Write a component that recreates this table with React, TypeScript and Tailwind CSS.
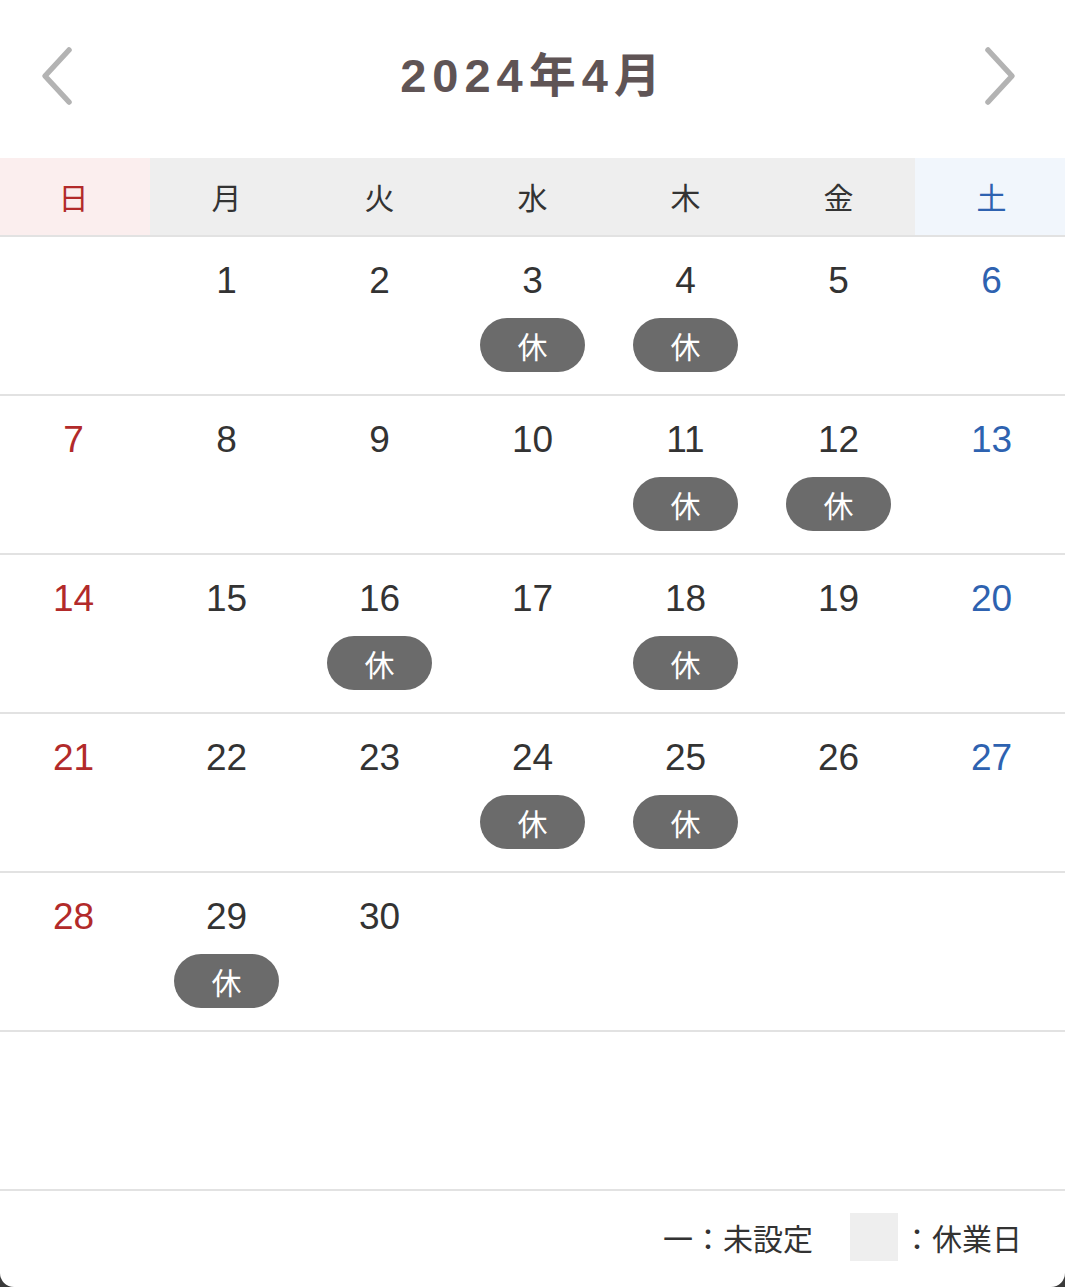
import { ReactNode } from "react";

const FONT = { fontFamily: '"Liberation Sans", "Noto Sans CJK JP", sans-serif' };
const JP = { fontFamily: '"Noto Sans CJK JP", "Liberation Sans", sans-serif' };

const weekdays = ["日", "月", "火", "水", "木", "金", "土"];

// April 2024 starts on Monday
const holidays = new Set([3, 4, 11, 12, 16, 18, 24, 25, 29]);

function buildWeeks() {
  const cells: (number | null)[] = [null];
  for (let d = 1; d <= 30; d++) cells.push(d);
  while (cells.length < 42) cells.push(null);
  const weeks: (number | null)[][] = [];
  for (let i = 0; i < 42; i += 7) weeks.push(cells.slice(i, i + 7));
  return weeks;
}

function Chevron({ dir }: { dir: "left" | "right" }) {
  return (
    <svg width="36" height="60" viewBox="0 0 36 60" fill="none">
      <path
        d={dir === "left" ? "M30 4 L6 30 L30 56" : "M6 4 L30 30 L6 56"}
        stroke="#b3b3b3"
        strokeWidth="5.5"
        strokeLinecap="round"
        strokeLinejoin="round"
      />
    </svg>
  );
}

function Badge({ children }: { children: ReactNode }) {
  return (
    <span
      className="mt-[15px] flex h-[54px] w-[105px] items-center justify-center rounded-full bg-[#6b6b6b] text-[30px] text-white"
      style={JP}
    >
      {children}
    </span>
  );
}

export default function App() {
  const weeks = buildWeeks();

  return (
    <div className="min-h-screen w-[1065px] bg-[#3a3a3a]" style={FONT}>
      <div className="flex h-[1287px] flex-col overflow-hidden rounded-b-[14px] bg-white">
        <header className="flex h-[158px] items-center justify-between pb-[6px] pl-[39px] pr-[47px]">
          <Chevron dir="left" />
          <h1 className="ml-[10px] text-[47px] font-bold tracking-[6px] text-[#5f5455]">
            2024年4月
          </h1>
          <Chevron dir="right" />
        </header>

        <div className="-mx-[3px] grid h-[79px] grid-cols-7 border-b-[2px] border-[#e2e2e2] bg-[#eeeeee]" style={JP}>
          {weekdays.map((w, i) => (
            <div
              key={w}
              className={
                i === 0
                  ? "flex items-center justify-center bg-[#fbeeee] text-[30px] text-[#b22a2a]"
                  : i === 6
                  ? "flex items-center justify-center bg-[#f1f6fc] text-[30px] text-[#2e62b0]"
                  : "flex items-center justify-center text-[30px] text-[#333333]"
              }
            >
              {w}
            </div>
          ))}
        </div>

        {weeks.map((week, wi) => (
          <div key={wi} className="-mx-[3px] grid h-[159px] grid-cols-7 border-b-[2px] border-[#e2e2e2]">
            {week.map((d, di) => (
              <div key={di} className="flex flex-col items-center pt-[22px]">
                {d !== null && (
                  <>
                    <span
                      className={
                        di === 0
                          ? "text-[37px] leading-[44px] text-[#b22a2a]"
                          : di === 6
                          ? "text-[37px] leading-[44px] text-[#2e62b0]"
                          : "text-[37px] leading-[44px] text-[#333333]"
                      }
                    >
                      {d}
                    </span>
                    {holidays.has(d) && <Badge>休</Badge>}
                  </>
                )}
              </div>
            ))}
          </div>
        ))}

        <footer className="flex flex-1 items-center justify-end gap-[37px] pb-[4px] pr-[43px] text-[30px] text-[#333333]" style={JP}>
          <span>一：未設定</span>
          <span className="flex items-center gap-[4px]">
            <span className="h-[48px] w-[48px] bg-[#eeeeee]" />
            <span>：休業日</span>
          </span>
        </footer>
      </div>
    </div>
  );
}
